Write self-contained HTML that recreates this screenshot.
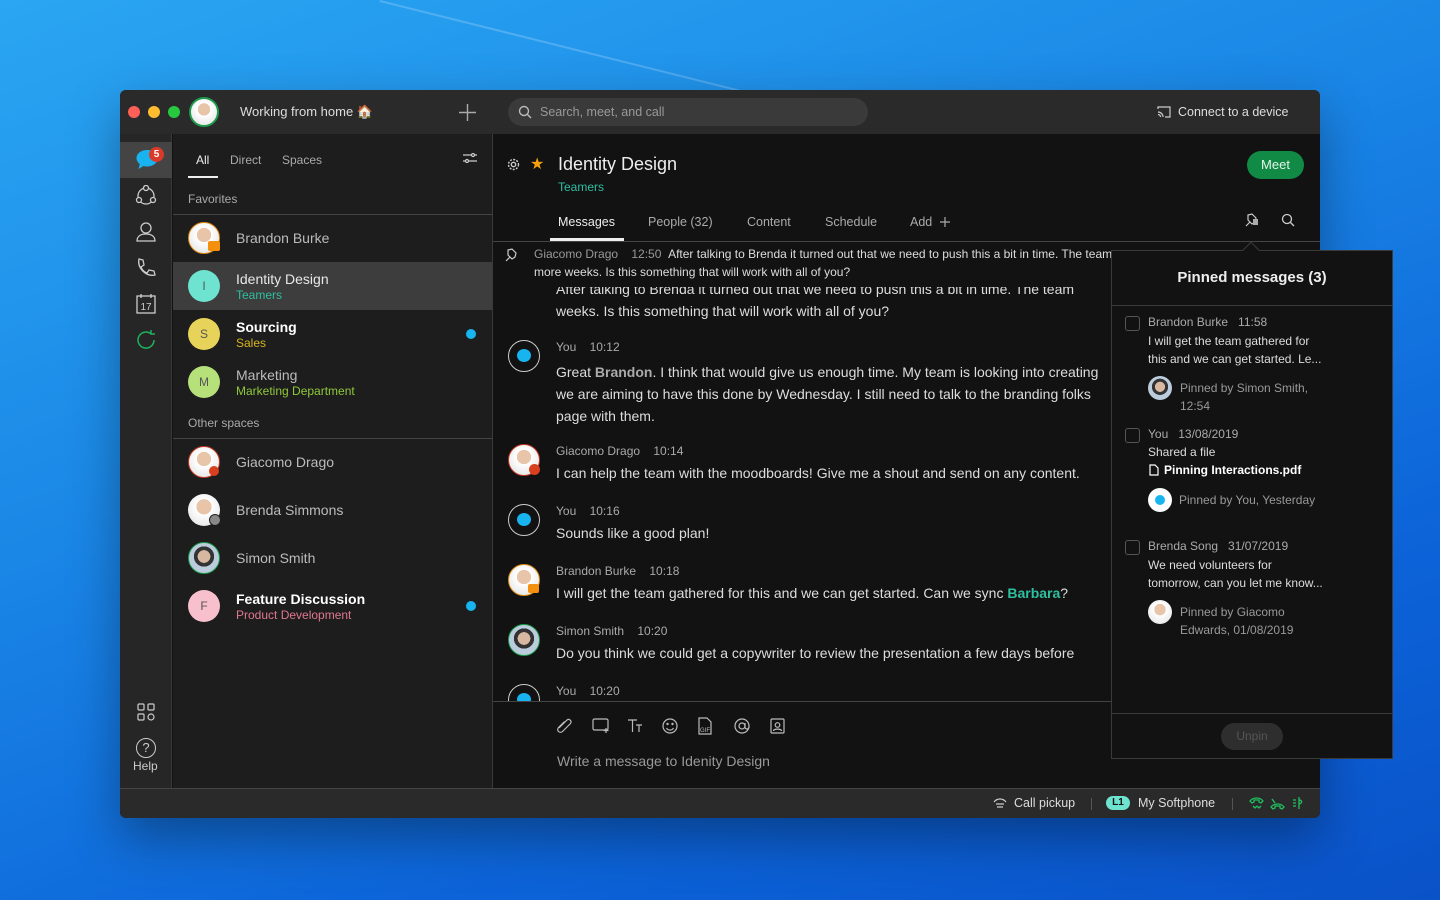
<!DOCTYPE html>
<html><head><meta charset="utf-8"><style>
*{box-sizing:border-box;margin:0;padding:0}
body{width:1440px;height:900px;overflow:hidden;position:relative;font-family:"Liberation Sans",sans-serif;background:linear-gradient(160deg,#2aa6f2 0%,#1a86e6 40%,#0c63d8 75%,#0a52c8 100%)}
.a{position:absolute}
.t{white-space:nowrap}
.win{left:120px;top:90px;width:1200px;height:728px;border-radius:6px;overflow:hidden;background:#121212;box-shadow:0 20px 50px rgba(0,0,0,.35)}
.av{border-radius:50%;width:32px;height:32px;display:flex;align-items:center;justify-content:center;font-size:12px;color:#555}
.nm{font-size:14px;color:#bbb}
.sub{font-size:12px}
.ph{background:radial-gradient(circle at 50% 40%,#e8c4a8 0 30%,#fff 31%,#ddd 100%)}
</style></head><body>
<div class="a" style="left:380px;top:0;width:370px;height:2px;background:rgba(255,255,255,.2);transform:rotate(14deg);transform-origin:0 0"></div>
<div class="a win">
 <div class="a" style="left:0;top:0;width:1200px;height:44px;background:#2a2a2a"></div>
 <div class="a" style="left:8px;top:16px;width:12px;height:12px;border-radius:50%;background:#fe5f57"></div>
 <div class="a" style="left:28px;top:16px;width:12px;height:12px;border-radius:50%;background:#febc2e"></div>
 <div class="a" style="left:48px;top:16px;width:12px;height:12px;border-radius:50%;background:#28c840"></div>
 <div class="a ph" style="left:69px;top:7px;width:30px;height:30px;border-radius:50%;border:2px solid #1a9a4a"></div>
 <div class="a t" style="left:120px;top:14px;font-size:13px;color:#ddd">Working from home 🏠</div>
 <svg class="a" style="left:339px;top:14px" width="17" height="17" stroke="#aaa" stroke-width="1.4"><path d="M8.5 0v17M0 8.5h17"/></svg>
 <div class="a" style="left:388px;top:8px;width:360px;height:28px;border-radius:14px;background:#3a3a3a"></div>
 <svg class="a" style="left:398px;top:15px" width="14" height="14"><circle cx="6" cy="6" r="4.5" stroke="#bbb" stroke-width="1.4" fill="none"/><path d="M9.5 9.5L13 13" stroke="#bbb" stroke-width="1.4"/></svg>
 <div class="a t" style="left:420px;top:15px;font-size:12.5px;color:#999">Search, meet, and call</div>
 <svg class="a" style="left:1037px;top:16px" width="14" height="12"><path d="M1 3V1h12v10H8" stroke="#ccc" fill="none" stroke-width="1.2"/><path d="M1 6a5 5 0 0 1 5 5M1 8.5a2.5 2.5 0 0 1 2.5 2.5" stroke="#ccc" fill="none" stroke-width="1.2"/></svg>
 <div class="a t" style="left:1058px;top:15px;font-size:12.5px;color:#ddd">Connect to a device</div>
 <div class="a" style="left:0;top:44px;width:52px;height:654px;background:#262626;border-right:1px solid #3a3a3a"></div>
 <div class="a" style="left:0;top:52px;width:52px;height:36px;background:#444"></div>
 <svg class="a" style="left:15px;top:59px" width="24" height="22"><path d="M12 1C6 1 1.5 4.5 1.5 9c0 2.5 1.3 4.6 3.3 6L3.5 20l5-3c1 .3 2.2.5 3.5.5 6 0 10.5-3.5 10.5-8S18 1 12 1z" fill="#17b4f0"/></svg>
 <div class="a" style="left:29px;top:57px;width:15px;height:15px;border-radius:50%;background:#d93a2a;color:#fff;font-size:10px;font-weight:bold;text-align:center;line-height:15px">5</div>
 <svg class="a" style="left:15px;top:95px" width="22" height="22" fill="none" stroke="#ccc" stroke-width="1.3"><circle cx="11" cy="11" r="8"/><circle cx="11" cy="3" r="2.5" fill="#262626"/><circle cx="4" cy="15" r="2.5" fill="#262626"/><circle cx="18" cy="15" r="2.5" fill="#262626"/></svg>
 <svg class="a" style="left:15px;top:131px" width="22" height="22" fill="none" stroke="#ccc" stroke-width="1.3"><circle cx="11" cy="7" r="5"/><path d="M2 20c0-5 4-7 9-7s9 2 9 7z"/></svg>
 <svg class="a" style="left:15px;top:167px" width="22" height="22" fill="none" stroke="#ccc" stroke-width="1.3"><path d="M4 2l4 1 1 5-3 2c1 3 3 5 6 6l2-3 5 1 1 4c-9 2-18-7-16-16z"/></svg>
 <svg class="a" style="left:15px;top:203px" width="22" height="22" fill="none" stroke="#ccc" stroke-width="1.3"><rect x="2" y="3" width="18" height="17"/><path d="M6 1v4M16 1v4"/><text x="11" y="17" font-size="10" fill="#ccc" stroke="none" text-anchor="middle" font-family="Liberation Sans">17</text></svg>
 <svg class="a" style="left:15px;top:239px" width="22" height="22" fill="none" stroke="#1fb25a" stroke-width="1.5"><path d="M19 11a8 8 0 1 1-3-6.2"/><path d="M16 1v4h4"/></svg>
 <svg class="a" style="left:17px;top:613px" width="18" height="18" fill="none" stroke="#ccc" stroke-width="1.2"><rect x="1" y="1" width="6" height="6" rx="1"/><rect x="11" y="1" width="6" height="6" rx="1"/><rect x="1" y="11" width="6" height="6" rx="1"/><circle cx="14" cy="14" r="3"/></svg>
 <div class="a" style="left:16px;top:648px;width:20px;height:20px;border-radius:50%;border:1.3px solid #ccc;color:#ccc;font-size:13px;text-align:center;line-height:18px">?</div>
 <div class="a t" style="left:13px;top:669px;font-size:12px;color:#ccc">Help</div>
 <div class="a" style="left:53px;top:44px;width:320px;height:654px;background:#1d1d1d;border-right:1px solid #3a3a3a"></div>
 <div class="a t" style="left:76px;top:63px;font-size:12px;color:#eee">All</div>
 <div class="a" style="left:68px;top:86px;width:30px;height:2px;background:#eee"></div>
 <div class="a t" style="left:110px;top:63px;font-size:12px;color:#aaa">Direct</div>
 <div class="a t" style="left:162px;top:63px;font-size:12px;color:#aaa">Spaces</div>
 <svg class="a" style="left:343px;top:63px" width="14" height="10" stroke="#ccc" stroke-width="1.2"><path d="M0 2h14M0 8h14"/><circle cx="10" cy="2" r="1.5" fill="#1d1d1d"/><circle cx="4" cy="8" r="1.5" fill="#1d1d1d"/></svg>
 <div class="a t" style="left:68px;top:102px;font-size:12px;color:#aaa">Favorites</div>
 <div class="a" style="left:53px;top:124px;width:320px;height:1px;background:#444"></div>
 <div class="a ph" style="left:68px;top:132px;width:32px;height:32px;border-radius:50%;border:1.5px solid #e08a10"></div>
 <div class="a" style="left:88px;top:151px;width:12px;height:10px;background:#f5900f;border-radius:2px"></div>
 <div class="a t nm" style="left:116px;top:140px">Brandon Burke</div>
 <div class="a" style="left:53px;top:172px;width:319px;height:48px;background:#3d3d3d"></div>
 <div class="a av" style="left:68px;top:180px;background:#6ee3cf">I</div>
 <div class="a t nm" style="left:116px;top:181px;color:#e8e8e8">Identity Design</div>
 <div class="a t sub" style="left:116px;top:198px;color:#2fbfa0">Teamers</div>
 <div class="a av" style="left:68px;top:228px;background:#e8d35a">S</div>
 <div class="a t nm" style="left:116px;top:229px;color:#fff;font-weight:bold">Sourcing</div>
 <div class="a t sub" style="left:116px;top:246px;color:#d7b520">Sales</div>
 <div class="a" style="left:346px;top:239px;width:10px;height:10px;border-radius:50%;background:#18b4f0"></div>
 <div class="a av" style="left:68px;top:276px;background:#b6e07a">M</div>
 <div class="a t nm" style="left:116px;top:277px">Marketing</div>
 <div class="a t sub" style="left:116px;top:294px;color:#8fc83a">Marketing Department</div>
 <div class="a t" style="left:68px;top:326px;font-size:12px;color:#aaa">Other spaces</div>
 <div class="a" style="left:53px;top:348px;width:320px;height:1px;background:#444"></div>
 <div class="a ph" style="left:68px;top:356px;width:32px;height:32px;border-radius:50%;border:1.5px solid #c0361f"></div>
 <div class="a" style="left:89px;top:376px;width:10px;height:10px;border-radius:50%;background:#d8401f"></div>
 <div class="a t nm" style="left:116px;top:364px">Giacomo Drago</div>
 <div class="a ph" style="left:68px;top:404px;width:32px;height:32px;border-radius:50%"></div>
 <div class="a" style="left:89px;top:424px;width:12px;height:12px;border-radius:50%;background:#888;border:1.5px solid #1d1d1d"></div>
 <div class="a t nm" style="left:116px;top:412px">Brenda Simmons</div>
 <div class="a" style="left:68px;top:452px;width:32px;height:32px;border-radius:50%;border:1.5px solid #1a9a4a;background:radial-gradient(circle at 50% 45%,#d8b8a0 0 28%,#333 29% 45%,#bcd 46%)"></div>
 <div class="a t nm" style="left:116px;top:460px">Simon Smith</div>
 <div class="a av" style="left:68px;top:500px;background:#f8bfcc">F</div>
 <div class="a t nm" style="left:116px;top:501px;color:#fff;font-weight:bold">Feature Discussion</div>
 <div class="a t sub" style="left:116px;top:518px;color:#e07890">Product Development</div>
 <div class="a" style="left:346px;top:511px;width:10px;height:10px;border-radius:50%;background:#18b4f0"></div>
 <svg class="a" style="left:387px;top:68px" width="13" height="13" fill="none" stroke="#ccc" stroke-width="1.4"><circle cx="6.5" cy="6.5" r="2.2"/><circle cx="6.5" cy="6.5" r="5" stroke-dasharray="2 1.3"/></svg>
 <div class="a t" style="left:410px;top:64px;font-size:16px;color:#f5a00f">★</div>
 <div class="a t" style="left:438px;top:64px;font-size:18px;color:#eee">Identity Design</div>
 <div class="a t" style="left:438px;top:90px;font-size:12px;color:#2fbfa0">Teamers</div>
 <div class="a t" style="left:1127px;top:61px;width:57px;height:28px;border-radius:14px;background:#108a44;color:#e6f5ea;font-size:13px;text-align:center;line-height:28px">Meet</div>
 <div class="a t" style="left:438px;top:125px;font-size:12.5px;color:#eee">Messages</div>
 <div class="a" style="left:430px;top:148px;width:74px;height:3px;background:#eee"></div>
 <div class="a t" style="left:528px;top:125px;font-size:12.5px;color:#aaa">People (32)</div>
 <div class="a t" style="left:627px;top:125px;font-size:12.5px;color:#aaa">Content</div>
 <div class="a t" style="left:705px;top:125px;font-size:12.5px;color:#aaa">Schedule</div>
 <div class="a t" style="left:790px;top:125px;font-size:12.5px;color:#aaa">Add</div>
 <svg class="a" style="left:820px;top:127px" width="10" height="10" stroke="#aaa" stroke-width="1.2"><path d="M5 0v10M0 5h10"/></svg>
 <svg class="a" style="left:1125px;top:123px" width="14" height="14" fill="none" stroke="#ccc" stroke-width="1.2"><path d="M1 13l4-4M3 7l4 4 3-2 1-4-4-4-4 1z"/><rect x="8" y="6" width="5" height="6" fill="#aaa" stroke="none"/></svg>
 <svg class="a" style="left:1161px;top:123px" width="14" height="14"><circle cx="6" cy="6" r="4.5" stroke="#ccc" stroke-width="1.3" fill="none"/><path d="M9.5 9.5L13 13" stroke="#ccc" stroke-width="1.3"/></svg>
 <div class="a" style="left:373px;top:151px;width:827px;height:1px;background:#444"></div>
 <div style="position:absolute;left:373px;top:152px;width:827px;height:459px;overflow:hidden">
  <div class="a t" style="left:63px;top:39px;font-size:14px;color:#ddd">After talking to Brenda it turned out that we need to push this a bit in time. The team</div>
  <div class="a t" style="left:63px;top:61px;font-size:14px;color:#ddd">weeks. Is this something that will work with all of you?</div>
  <div class="a" style="left:15px;top:98px;width:32px;height:32px;border-radius:50%;border:1.3px solid #ccc"></div><div class="a" style="left:24px;top:107px;width:14px;height:13px;border-radius:50%;background:#17b4f0"></div>
  <div class="a t" style="left:63px;top:98px;font-size:12px;color:#aaa">You &nbsp;&nbsp; 10:12</div>
  <div class="a t" style="left:63px;top:119px;font-size:14px;color:#ddd;line-height:22px">Great <span style="color:#aaa;font-weight:bold">Brandon</span>. I think that would give us enough time. My team is looking into creating<br>we are aiming to have this done by Wednesday. I still need to talk to the branding folks<br>page with them.</div>
  <div class="a ph" style="left:15px;top:202px;width:32px;height:32px;border-radius:50%;border:1.5px solid #c0361f"></div>
  <div class="a" style="left:36px;top:222px;width:11px;height:11px;border-radius:50%;background:#d8401f"></div>
  <div class="a t" style="left:63px;top:202px;font-size:12px;color:#aaa">Giacomo Drago &nbsp;&nbsp; 10:14</div>
  <div class="a t" style="left:63px;top:223px;font-size:14px;color:#ddd">I can help the team with the moodboards! Give me a shout and send on any content.</div>
  <div class="a" style="left:15px;top:262px;width:32px;height:32px;border-radius:50%;border:1.3px solid #ccc"></div><div class="a" style="left:24px;top:271px;width:14px;height:13px;border-radius:50%;background:#17b4f0"></div>
  <div class="a t" style="left:63px;top:262px;font-size:12px;color:#aaa">You &nbsp;&nbsp; 10:16</div>
  <div class="a t" style="left:63px;top:283px;font-size:14px;color:#ddd">Sounds like a good plan!</div>
  <div class="a ph" style="left:15px;top:322px;width:32px;height:32px;border-radius:50%;border:1.5px solid #e08a10"></div>
  <div class="a" style="left:35px;top:342px;width:11px;height:9px;background:#f5900f;border-radius:2px"></div>
  <div class="a t" style="left:63px;top:322px;font-size:12px;color:#aaa">Brandon Burke &nbsp;&nbsp; 10:18</div>
  <div class="a t" style="left:63px;top:343px;font-size:14px;color:#ddd">I will get the team gathered for this and we can get started. Can we sync <b style="color:#2fbfa0">Barbara</b>?</div>
  <div class="a" style="left:15px;top:382px;width:32px;height:32px;border-radius:50%;border:1.5px solid #1a9a4a;background:radial-gradient(circle at 50% 45%,#d8b8a0 0 28%,#333 29% 45%,#bcd 46%)"></div>
  <div class="a t" style="left:63px;top:382px;font-size:12px;color:#aaa">Simon Smith &nbsp;&nbsp; 10:20</div>
  <div class="a t" style="left:63px;top:403px;font-size:14px;color:#ddd">Do you think we could get a copywriter to review the presentation a few days before</div>
  <div class="a" style="left:15px;top:442px;width:32px;height:32px;border-radius:50%;border:1.3px solid #ccc"></div><div class="a" style="left:24px;top:451px;width:14px;height:13px;border-radius:50%;background:#17b4f0"></div>
  <div class="a t" style="left:63px;top:442px;font-size:12px;color:#aaa">You &nbsp;&nbsp; 10:20</div>
  <div class="a" style="left:0;top:0;width:827px;height:45px;background:#121212"></div>
  <svg class="a" style="left:12px;top:6px" width="14" height="14" fill="none" stroke="#ccc" stroke-width="1.2"><path d="M1 13l4-4M3 7l4 4 3-2 1-4-4-4-4 1z"/></svg>
  <div class="a t" style="left:41px;top:5px;font-size:12px;color:#ddd"><span style="color:#999">Giacomo Drago &nbsp;&nbsp; 12:50</span> &nbsp;After talking to Brenda it turned out that we need to push this a bit in time. The team</div>
  <div class="a t" style="left:41px;top:23px;font-size:12px;color:#ddd">more weeks. Is this something that will work with all of you?</div>
 </div>
 <div class="a" style="left:373px;top:611px;width:827px;height:1px;background:#444"></div>
 <svg class="a" style="left:436px;top:627px" width="230" height="18" fill="none" stroke="#bbb" stroke-width="1.2">
  <path d="M3 14l8-8a2.5 2.5 0 0 1 3.5 3.5l-8 8a1.5 1.5 0 0 1-4-4l6-6" transform="translate(0,-3)"/>
  <rect x="37" y="2" width="15" height="11" rx="1.5"/><path d="M50 11v5M47.5 13.5h5"/>
  <path d="M72 3h9M76.5 3v12M80 8h6M83 8v7"/>
  <circle cx="114" cy="9" r="7"/><circle cx="111.5" cy="7" r=".6" fill="#bbb"/><circle cx="116.5" cy="7" r=".6" fill="#bbb"/><path d="M110.5 11a4 4 0 0 0 7 0"/>
  <path d="M143 1h8l4 4v12h-12z"/><text x="149" y="15" font-size="6" fill="#bbb" stroke="none" text-anchor="middle" font-family="Liberation Sans">GIF</text>
  <circle cx="186" cy="9" r="7"/><circle cx="186" cy="9" r="3"/><path d="M189 6v4a2 2 0 0 0 4 0"/>
  <rect x="215" y="2" width="13" height="14" rx="1"/><circle cx="221.5" cy="8" r="2.3"/><path d="M217.5 14c0-2.5 8-2.5 8 0"/>
 </svg>
 <div class="a t" style="left:437px;top:663px;font-size:14px;color:#999">Write a message to Idenity Design</div>
 <div class="a" style="left:0;top:698px;width:1200px;height:30px;background:#2a2a2a;border-top:1px solid #444"></div>
 <svg class="a" style="left:873px;top:707px" width="14" height="12" fill="none" stroke="#ccc" stroke-width="1.2"><path d="M1 5c3-4 9-4 12 0M3 7h8M4 10h6"/></svg>
 <div class="a t" style="left:894px;top:706px;font-size:12.5px;color:#ddd">Call pickup</div>
 <div class="a" style="left:971px;top:708px;width:1px;height:12px;background:#555"></div>
 <div class="a t" style="left:986px;top:706px;width:24px;height:14px;border-radius:7px;background:#6ee3cf;color:#111;font-size:10px;font-weight:bold;text-align:center;line-height:14px">L1</div>
 <div class="a t" style="left:1018px;top:706px;font-size:12.5px;color:#ddd">My Softphone</div>
 <div class="a" style="left:1112px;top:708px;width:1px;height:12px;background:#555"></div>
 <svg class="a" style="left:1129px;top:706px" width="58" height="14" fill="none" stroke="#1fc060" stroke-width="1.3"><path d="M1 5c3-4 10-4 13 0l-2 2-2-1V4H5v2L3 7z"/><path d="M4 10l2 2 2-2M8 10l2 2 2-2"/><path d="M23 3l3 4M22 11c3-4 10-4 13 0l-2 2-2-1v-2h-5v2l-2 1z"/><path d="M44 4h3M44 7h3M44 10h3M50 1v12M50 4c3 0 4 3 0 4"/></svg>
</div>
<div class="a" style="left:1111px;top:250px;width:282px;height:509px;background:#121212;border:1px solid #3a3a3a">
 <div class="a t" style="left:0;top:18px;width:280px;text-align:center;font-size:15px;font-weight:bold;color:#eee">Pinned messages (3)</div>
 <div class="a" style="left:0;top:54px;width:280px;height:1px;background:#3a3a3a"></div>
 <div class="a" style="left:13px;top:65px;width:15px;height:15px;border-radius:3px;border:1px solid #555"></div>
 <div class="a t" style="left:36px;top:64px;font-size:12px;color:#aaa">Brandon Burke &nbsp; 11:58</div>
 <div class="a" style="left:36px;top:81px;font-size:12px;color:#ddd;line-height:18px">I will get the team gathered for<br>this and we can get started. Le...</div>
 <div class="a" style="left:36px;top:125px;width:24px;height:24px;border-radius:50%;background:radial-gradient(circle at 50% 45%,#d8b8a0 0 28%,#333 29% 45%,#bcd 46%)"></div>
 <div class="a" style="left:68px;top:128px;font-size:12px;color:#999;line-height:18px">Pinned by Simon Smith,<br>12:54</div>
 <div class="a" style="left:13px;top:177px;width:15px;height:15px;border-radius:3px;border:1px solid #555"></div>
 <div class="a t" style="left:36px;top:176px;font-size:12px;color:#aaa">You &nbsp; 13/08/2019</div>
 <div class="a t" style="left:36px;top:194px;font-size:12px;color:#ddd">Shared a file</div>
 <svg class="a" style="left:37px;top:213px" width="10" height="12" fill="none" stroke="#fff" stroke-width="1.2"><path d="M1 1h5l3 3v7H1z"/></svg>
 <div class="a t" style="left:52px;top:212px;font-size:12px;color:#fff;font-weight:bold">Pinning Interactions.pdf</div>
 <div class="a" style="left:36px;top:237px;width:24px;height:24px;border-radius:50%;background:#fff"></div><div class="a" style="left:43px;top:244px;width:10px;height:10px;border-radius:50%;background:#17b4f0"></div>
 <div class="a t" style="left:67px;top:242px;font-size:12px;color:#999">Pinned by You, Yesterday</div>
 <div class="a" style="left:13px;top:289px;width:15px;height:15px;border-radius:3px;border:1px solid #555"></div>
 <div class="a t" style="left:36px;top:288px;font-size:12px;color:#aaa">Brenda Song &nbsp; 31/07/2019</div>
 <div class="a" style="left:36px;top:305px;font-size:12px;color:#ddd;line-height:18px">We need volunteers for<br>tomorrow, can you let me know...</div>
 <div class="a ph" style="left:36px;top:349px;width:24px;height:24px;border-radius:50%"></div>
 <div class="a" style="left:68px;top:352px;font-size:12px;color:#999;line-height:18px">Pinned by Giacomo<br>Edwards, 01/08/2019</div>
 <div class="a" style="left:0;top:462px;width:280px;height:1px;background:#3a3a3a"></div>
 <div class="a t" style="left:109px;top:472px;width:62px;height:27px;border-radius:14px;background:#2e2e2e;color:#555;font-size:12px;text-align:center;line-height:27px">Unpin</div>
</div>
<div class="a" style="left:1245px;top:244px;width:12px;height:12px;background:#121212;border-left:1px solid #3a3a3a;border-top:1px solid #3a3a3a;transform:rotate(45deg)"></div>
</body></html>
